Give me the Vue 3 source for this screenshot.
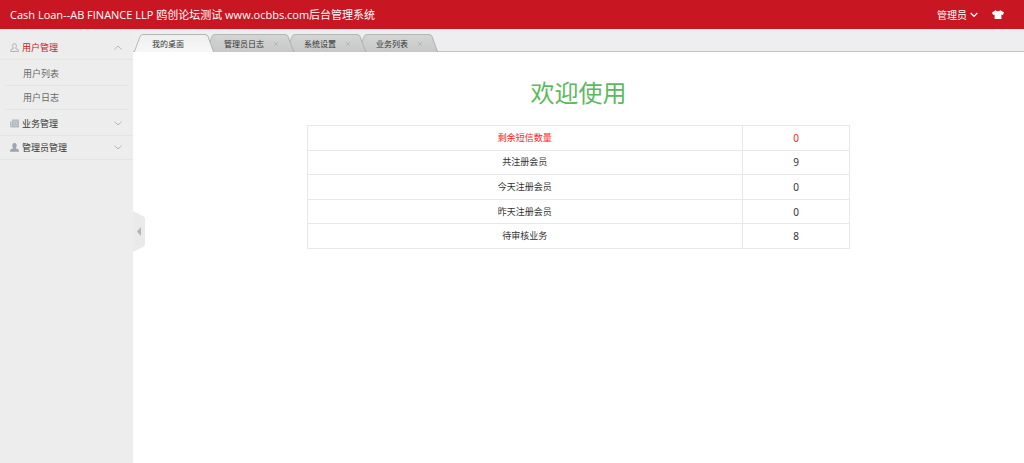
<script setup>
import { ref } from 'vue'

const title = 'Cash Loan--AB FINANCE LLP 鸥创论坛测试 www.ocbbs.com后台管理系统'
const groups = ref([
  { name: '用户管理', icon: 'user', open: true, items: ['用户列表', '用户日志'] },
  { name: '业务管理', icon: 'news', open: false, items: [] },
  { name: '管理员管理', icon: 'admin', open: false, items: [] },
])
const tabs = ['我的桌面', '管理员日志', '系统设置', '业务列表']
const active = ref(0)
const rows = [
  ['剩余短信数量', 0],
  ['共注册会员', 9],
  ['今天注册会员', 0],
  ['昨天注册会员', 0],
  ['待审核业务', 8],
]
</script>

<template>
  <div class="page">
    <header class="top">
      <a class="brand" href="#">{{ title }}</a>
      <div class="tools">
        <button class="account" type="button">
          管理员
          <svg width="8" height="6" viewBox="0 0 8 6"><path d="M.7 1 4 4.4 7.3 1" fill="none" stroke="#fff" stroke-width="1.3" /></svg>
        </button>
        <button class="skin" type="button" aria-label="换肤">
          <svg width="12" height="9" viewBox="0 0 12 9"><path d="M3.500.3Q6 2.200 8.500.3L12 2.400 10.900 4.900 9.400 4.500V9H2.600V4.500L1.100 4.900 0 2.400Z" fill="#fff" /></svg>
        </button>
      </div>
    </header>
    <div class="body">
      <aside class="side">
        <nav>
          <section v-for="g in groups" :key="g.name" class="group">
            <button class="head" :class="{ open: g.open }" type="button" @click="g.open = !g.open">
              <svg v-if="g.icon === 'user'" class="icon" width="9" height="9" viewBox="0 0 9 9"><path d="M3.300 5C2.200 3.600 2.200.7 4.500.7S6.800 3.600 5.700 5V5.600L8 6.600Q8.500 7 8.500 8.400H.5Q.5 7 1 6.600L3.300 5.600Z" fill="none" stroke="#a9b1b9" stroke-width="1" /></svg>
              <svg v-else-if="g.icon === 'news'" class="icon" width="9" height="9" viewBox="0 0 9 9"><path d="M2 .5H9V8.500H1L0 7.500V2.500H2Z" fill="#b3b9c1" /><path d="M3.200 2.300H7.800M3.200 4.300H5M6 4.300H7.800M3.200 6.300H7.800M1.500 3V7.500" stroke="#dfe2e5" stroke-width=".5" /></svg>
              <svg v-else class="icon" width="9" height="9" viewBox="0 0 9 9"><path d="M3.300 5.200C1.700 3.500 2 0 4.500 0S7.300 3.500 5.700 5.200L8.300 6.200Q9 6.700 9 8.800H0Q0 6.700.7 6.200Z" fill="#9da5b0" /></svg>
              <span>{{ g.name }}</span>
              <svg class="arrow" width="8" height="5" viewBox="0 0 8 5"><path d="M.5.600 4 4 7.500.600" fill="none" stroke="#b5b5b5" stroke-width="1" /></svg>
            </button>
            <ul v-if="g.open && g.items.length">
              <li v-for="i in g.items" :key="i"><a href="#">{{ i }}</a></li>
            </ul>
          </section>
        </nav>
        <button class="handle" type="button" aria-label="收起菜单">
          <svg width="12" height="41" viewBox="0 0 12 41"><path d="M0 0 10 5Q12 6 12 8V33Q12 35 10 36L0 41Z" fill="#eaeaea" /><path d="M8 16V25L4 20.500Z" fill="#b4b4b4" /></svg>
        </button>
      </aside>
      <main class="main">
        <div class="tabs">
          <div v-for="(t, n) in tabs" :key="t" class="tab" :class="{ active: n === active }">
            <svg class="cap" width="9" height="18" viewBox="0 0 9 18">
              <defs><linearGradient :id="'l' + n" x2="0" y2="1"><stop :stop-color="n === active ? '#eeefef' : '#d3d4d4'" /><stop offset="1" :stop-color="n === active ? '#f7f7f7' : '#c7c8c8'" /></linearGradient></defs>
              <path d="M0 18 6 2.500Q6.800.5 9 .5V18Z" :fill="`url(#l${n})`" /><path d="M.3 18 6 2.500Q6.800.5 9 .5" fill="none" stroke="#b6b6b6" />
            </svg>
            <div class="mid">
              <button class="label" type="button" @click="active = n">{{ t }}</button>
              <button v-if="n" class="close" type="button" aria-label="关闭">
                <svg width="6" height="6" viewBox="0 0 6 6"><path d="M1 1 5 5M5 1 1 5" stroke="#b1b5b8" stroke-width=".9" /></svg>
              </button>
            </div>
            <svg class="cap" width="9" height="18" viewBox="0 0 9 18">
              <path d="M9 18 3 2.500Q2.200.5 0 .5V18Z" :fill="`url(#l${n})`" /><path d="M8.700 18 3 2.500Q2.200.5 0 .5" fill="none" stroke="#b0b0b0" />
            </svg>
          </div>
        </div>
        <h1>欢迎使用</h1>
        <table>
          <tbody>
            <tr v-for="r in rows" :key="r[0]">
              <th scope="row">{{ r[0] }}</th>
              <td>{{ r[1] }}</td>
            </tr>
          </tbody>
        </table>
      </main>
    </div>
  </div>
</template>

<style>
body {
  margin: 0;
}
</style>

<style scoped>
.page {
  display: flex;
  flex-direction: column;
  min-height: 100vh;
  background: #fff;
  color: #333;
  font-family: "Noto Sans", "Noto Sans CJK SC", sans-serif;
  font-size: 9px;
}
button {
  padding: 0;
  border: 0;
  background: none;
  color: inherit;
  font: inherit;
  cursor: pointer;
}
a {
  color: inherit;
  text-decoration: none;
}
svg {
  display: block;
  flex: none;
}
.top {
  display: flex;
  align-items: center;
  justify-content: space-between;
  height: 29px;
  padding: 0 20px 0 10px;
  background: #c81623;
  color: #fff;
}
.brand {
  font-family: "Open Sans", "Noto Sans CJK SC", sans-serif;
  font-size: 11px;
  line-height: 29px;
  white-space: nowrap;
}
.tools {
  display: flex;
  align-items: center;
  gap: 14px;
}
.account {
  display: flex;
  align-items: center;
  gap: 3px;
  font-size: 10px;
}
.body {
  display: flex;
  flex: 1;
}
.side {
  position: relative;
  flex: none;
  box-sizing: border-box;
  width: 133px;
  padding-top: 6px;
  background: #ededed;
}
.head {
  display: flex;
  align-items: center;
  gap: 3px;
  box-sizing: border-box;
  width: 100%;
  height: 25px;
  padding: 0 11px 0 10px;
  border-bottom: 1px solid #e4e4e4;
}
.group:last-child .head {
  height: 24px;
}
.head.open {
  color: #c81623;
}
.arrow {
  margin-left: auto;
}
.open .arrow {
  transform: rotate(180deg);
}
ul {
  margin: 0;
  padding: 2px 5px 1px;
  list-style: none;
}
li {
  box-sizing: border-box;
  height: 24px;
  padding-left: 18px;
  border-bottom: 1px solid #e4e4e4;
  color: #666;
  line-height: 23px;
}
.handle {
  position: absolute;
  top: 182px;
  left: 100%;
}
.main {
  flex: 1;
  min-width: 0;
}
.tabs {
  display: flex;
  align-items: flex-end;
  box-sizing: border-box;
  height: 23px;
  padding-left: 1px;
  border-bottom: 1px solid #c4c4c6;
  background: #eeeef0;
}
.tab {
  position: relative;
  display: flex;
  height: 18px;
  margin: 0 -8px -1px 0;
  font-size: 8px;
}
.tab:nth-child(1) {
  z-index: 4;
}
.tab:nth-child(2) {
  z-index: 3;
}
.tab:nth-child(3) {
  z-index: 2;
}
.mid {
  display: flex;
  align-items: center;
  gap: 9px;
  box-sizing: border-box;
  height: 18px;
  padding: 0 6px 0 9px;
  border-top: 1px solid #b6b6b6;
  background: linear-gradient(#d3d4d4, #c7c8c8);
  white-space: nowrap;
}
.active .mid {
  padding-right: 21px;
  background: linear-gradient(#eeefef, #f7f7f7);
}
h1 {
  margin: 23px 0 15px;
  color: #5eb95e;
  font-size: 24px;
  font-weight: 400;
  line-height: 35px;
  text-align: center;
}
table {
  width: 61%;
  height: 124px;
  margin: 0 auto;
  border-collapse: collapse;
  table-layout: fixed;
}
th,
td {
  padding: 0;
  border: 1px solid #e8e8e8;
  font-weight: 400;
  line-height: 18px;
  text-align: center;
}
th {
  width: 80%;
}
td {
  font-size: 10px;
}
tr:first-child {
  color: #f22;
}
</style>
